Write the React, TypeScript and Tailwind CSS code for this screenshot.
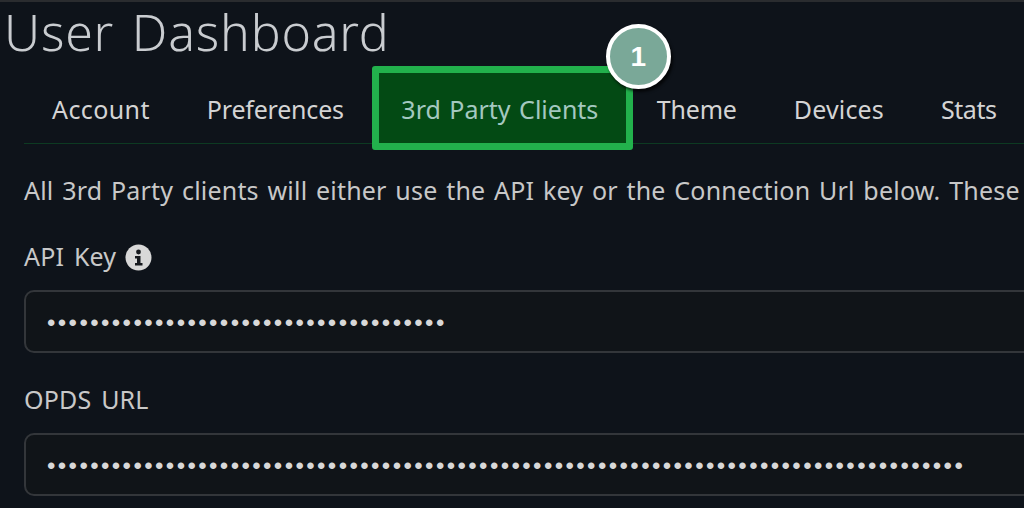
function Tab({ label, active, cls }: { label: string; active?: boolean; cls?: string }) {
  if (active) {
    return (
      <div className="relative ml-[-29px] mr-[-33px] mb-[3px] flex h-[84px] w-[261px] shrink-0 items-center justify-center rounded-[3px] border-[7px] border-[#22b14c] bg-[#034a14] pt-[4px] pr-[5px] text-[#a4c8c0] [word-spacing:2px]">
        <span>{label}</span>
        <div className="absolute right-[-45px] top-[-49px] flex h-[65px] w-[65px] items-center justify-center rounded-full border-[4px] border-white bg-[#7aa898] text-[28px] font-bold text-white shadow-[2px_3px_3px_rgba(0,0,0,0.7)] font-['Liberation_Sans',sans-serif]">1</div>
      </div>
    );
  }
  return <div className={"shrink-0 text-[#d4d4d4] " + (cls ?? "")}>{label}</div>;
}

function Field({ label, dots, info }: { label: string; dots: number; info?: boolean }) {
  return (
    <div>
      <div className="flex h-[36px] items-center gap-[9px] text-[25px] text-[#c8c8c8] tracking-[0.2px] [word-spacing:3px]">
        <span>{label}</span>
        {info && (
          <svg width="27" height="27" viewBox="0 0 27 27" className="shrink-0">
            <circle cx="13.5" cy="13.5" r="13" fill="#d8d8d8" />
            <circle cx="13.5" cy="8" r="2.4" fill="#15181d" />
            <path d="M10 12h5.5v7H17.5v2.4H10V19h2v-4.6h-2z" fill="#15181d" />
          </svg>
        )}
      </div>
      <div className="mt-[15px] flex h-[63px] w-[1040px] items-center rounded-[10px] border-2 border-[#33363a] bg-[#101418] pl-[21px] pt-[2px] text-[#d8d8d8]">
        <span className="font-['Liberation_Sans',sans-serif] text-[24px] leading-none tracking-[2.4px]">{"•".repeat(dots)}</span>
      </div>
    </div>
  );
}

export default function App() {
  return (
    <div className="h-[508px] w-[1024px] overflow-hidden bg-[#0e131a] font-['Noto_Sans',sans-serif]">
      <div className="h-[2px] bg-[#2a2c2f]" />
      <h1 className="ml-[4px] mt-[1px] h-[58px] text-[50px] font-light leading-[58px] whitespace-nowrap tracking-[0.8px] text-[#c9ccd0] [word-spacing:4px]">User Dashboard</h1>
      <div className="ml-[24px] mt-[9px] flex h-[74px] w-[1000px] items-center gap-[57px] border-b border-[#0d3a22] pl-[28px] pt-[6px] text-[25px] whitespace-nowrap">
        <Tab label="Account" cls="tracking-[0.4px]" />
        <Tab label="Preferences" cls="tracking-[-0.2px]" />
        <Tab label="3rd Party Clients" active />
        <Tab label="Theme" cls="tracking-[-0.2px]" />
        <Tab label="Devices" cls="tracking-[0.15px]" />
        <Tab label="Stats" cls="tracking-[-0.4px]" />
      </div>
      <p className="ml-[24px] mt-[28px] h-[36px] text-[25px] leading-[36px] whitespace-nowrap tracking-[0.2px] text-[#c8c8c8] [word-spacing:2px]">All 3rd Party clients will either use the API key or the Connection Url below. These</p>
      <div className="ml-[24px] mt-[31px] flex flex-col gap-[29px]">
        <Field label="API Key" dots={37} info />
        <Field label="OPDS URL" dots={85} />
      </div>
    </div>
  );
}
